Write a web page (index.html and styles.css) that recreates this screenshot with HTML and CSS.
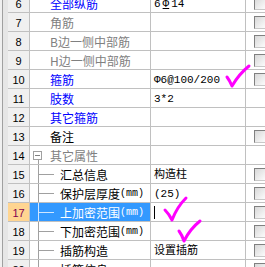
FILE: index.html
```html
<!doctype html>
<html lang="en">
<head>
    <meta charset="utf-8">
    <title>属性编辑</title>
    <link rel="stylesheet" href="styles.css">
</head>
<body>
<div class="wrap">
    <div class="side"></div>
    <div class="grid">
        <div class="row"><div class="num">6</div><div class="name blue">全部纵筋</div><div class="val">6<span class="bar">Φ</span>14</div><div class="cb"><span class="chk"></span></div></div>
        <div class="row"><div class="num">7</div><div class="name gray">角筋</div><div class="val"></div><div class="cb"><span class="chk"></span></div></div>
        <div class="row"><div class="num">8</div><div class="name gray">B边一侧中部筋</div><div class="val"></div><div class="cb"><span class="chk"></span></div></div>
        <div class="row"><div class="num">9</div><div class="name gray">H边一侧中部筋</div><div class="val"></div><div class="cb"><span class="chk"></span></div></div>
        <div class="row"><div class="num">10</div><div class="name blue">箍筋</div><div class="val">Φ6@100/200</div><div class="cb"><span class="chk"></span></div></div>
        <div class="row"><div class="num">11</div><div class="name blue">肢数</div><div class="val">3*2</div><div class="cb"></div></div>
        <div class="row"><div class="num">12</div><div class="name blue">其它箍筋</div><div class="val"></div><div class="cb"></div></div>
        <div class="row"><div class="num">13</div><div class="name">备注</div><div class="val"></div><div class="cb"><span class="chk"></span></div></div>
        <div class="row"><div class="num">14</div><div class="name group"><span class="fold"><span class="box"></span></span><span class="gray">其它属性</span></div><div class="val"></div><div class="cb"></div></div>
        <div class="row"><div class="num">15</div><div class="name child"><span class="branch"></span>汇总信息</div><div class="val">构造柱</div><div class="cb"><span class="chk"></span></div></div>
        <div class="row"><div class="num">16</div><div class="name child"><span class="branch"></span>保护层厚度<span class="unit">(mm)</span></div><div class="val">(25)</div><div class="cb"><span class="chk"></span></div></div>
        <div class="row current"><div class="num">17</div><div class="name child"><span class="branch"></span>上加密范围<span class="unit">(mm)</span></div><div class="val"><span class="caret"></span></div><div class="cb"><span class="chk"></span></div></div>
        <div class="row"><div class="num">18</div><div class="name child"><span class="branch"></span>下加密范围<span class="unit">(mm)</span></div><div class="val"></div><div class="cb"><span class="chk"></span></div></div>
        <div class="row"><div class="num">19</div><div class="name child"><span class="branch"></span>插筋构造</div><div class="val">设置插筋</div><div class="cb"><span class="chk"></span></div></div>
        <div class="row"><div class="num">20</div><div class="name child"><span class="branch"></span>插筋信息</div><div class="val"></div><div class="cb"><span class="chk"></span></div></div>
    </div>
</div>
<svg class="marks" width="265" height="267" viewBox="0 0 265 267">
    <path d="M227 77 Q230 81 232 86 Q239 74 249 66"/>
    <path d="M165 210 Q169 214 172 220 Q177 207 186 198"/>
    <path d="M179 231 Q182 235 184 241 Q190 229 200 221"/>
</svg>
</body>
</html>
```

FILE: styles.css
```css
* {
    margin: 0;
    padding: 0;
    box-sizing: border-box;
}

body {
    width: 265px;
    height: 267px;
    overflow: hidden;
    background: #fff;
    position: relative;
    font-family: "Noto Sans CJK SC", sans-serif;
    font-size: 12px;
}

.wrap {
    display: flex;
    margin-top: -6px;
}

.side {
    width: 8px;
    flex: none;
    background: linear-gradient(to right, #f0f0f0 2px, #a0a0a0 2px, #a0a0a0 3px, #e6e6e6 3px);
}

.grid {
    flex: 1;
}

.row {
    display: grid;
    grid-template-columns: 22px 121px 95px 1fr;
    height: 19px;
}

.row > div {
    border-right: 1px solid #c0c0c0;
    border-bottom: 1px solid #c0c0c0;
    line-height: 20px;
    white-space: nowrap;
    overflow: hidden;
}

.num {
    background: #f0f0f0;
    text-align: center;
    font-family: "Liberation Sans", sans-serif;
    font-size: 11px;
    color: #000;
}

.name {
    padding-left: 20px;
    color: #000;
}

.blue {
    color: #0000ff;
}

.gray {
    color: #808080;
}

.group {
    display: flex;
    padding-left: 0;
}

.fold {
    width: 20px;
    flex: none;
    display: flex;
    align-items: center;
    padding-left: 3px;
    background: linear-gradient(#a0a0a0, #a0a0a0) 8px 13px / 1px 6px no-repeat;
}

.box {
    width: 9px;
    height: 9px;
    border: 1px solid #a0a0a0;
    background: linear-gradient(#808080, #808080) center / 5px 1px no-repeat, #fff;
}

.child {
    display: flex;
    padding-left: 0;
}

.branch {
    width: 30px;
    flex: none;
    background:
        linear-gradient(#a0a0a0, #a0a0a0) 8px 0 / 1px 100% no-repeat,
        linear-gradient(#a0a0a0, #a0a0a0) 8px 9px / 16px 1px no-repeat;
}

.unit {
    font-family: "Liberation Mono", monospace;
    font-size: 10px;
}

.val {
    padding-left: 3px;
    font-family: "Liberation Mono", "Noto Sans CJK SC", monospace;
    font-size: 11px;
    color: #000;
}

.bar {
    margin: 0 2px;
    text-decoration: underline;
}

.cb {
    border-right: 0 !important;
    padding: 3px 0 0 8px;
}

.chk {
    display: block;
    width: 13px;
    height: 13px;
    border: 1px solid;
    border-color: #808080 #c8c8c8 #c8c8c8 #808080;
    background: linear-gradient(135deg, #d8d8d8, #fdfdfd);
}

.current .num {
    background: #ffd591;
    color: #800050;
}

.current .name {
    background: #3399ff;
    color: #fff;
}

.current .branch {
    background:
        linear-gradient(#d0e6ff, #d0e6ff) 8px 0 / 1px 100% no-repeat,
        linear-gradient(#d0e6ff, #d0e6ff) 8px 9px / 16px 1px no-repeat;
}

.caret {
    display: inline-block;
    width: 1px;
    height: 13px;
    margin-top: 3px;
    vertical-align: top;
    background: #000;
}

.marks {
    position: absolute;
    left: 0;
    top: 0;
    pointer-events: none;
    fill: none;
    stroke: #ff00ff;
    stroke-width: 3;
    stroke-linecap: round;
    stroke-linejoin: round;
}
```
